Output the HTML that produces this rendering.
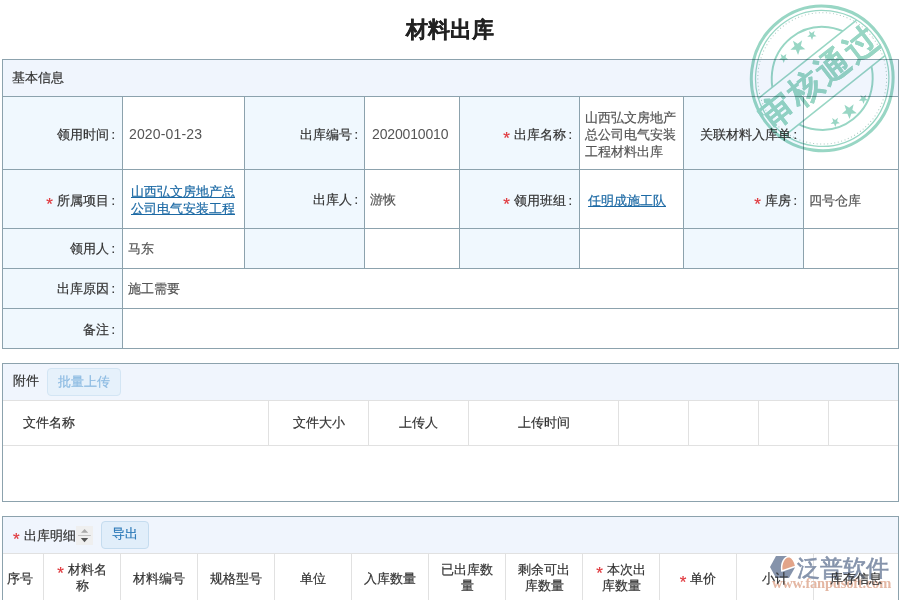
<!DOCTYPE html>
<html><head><meta charset="utf-8">
<style>
html,body{margin:0;padding:0;width:900px;height:600px;overflow:hidden;background:#fff;}
body{position:relative;font-family:"Liberation Sans",sans-serif;font-size:13px;color:#333;}
.a{position:absolute;}
.h{position:absolute;height:1px;background:#8ca2ad;}
.v{position:absolute;width:1px;background:#8ca2ad;}
.hg{position:absolute;height:1px;background:#e1e1e1;}
.vg{position:absolute;width:1px;background:#e1e1e1;}
.t{position:absolute;white-space:nowrap;line-height:17px;color:#333;-webkit-text-stroke:0.2px currentColor;}
.r{text-align:right;}
.c{text-align:center;}
.val{color:#555;}
.d{font-size:14px;letter-spacing:0.15px;-webkit-text-stroke:0;}
.d2{letter-spacing:-0.15px;}
.req{color:#e0393e;display:inline-block;font-size:17px;line-height:10px;position:relative;top:5px;margin-right:4px;}
.lk{color:#1d6aa5;text-decoration:underline;}
.co{font-weight:normal;margin-left:2.5px;}
.lab{background:#f0f8fe;}
.hdr{background:#f0f5fd;}
</style></head><body>

<!-- title -->
<div class="t c" style="left:0;top:16px;width:900px;font-size:22px;font-weight:bold;line-height:28px;color:#222;">材料出库</div>

<!-- ============ BOX 1 ============ -->
<div class="a hdr" style="left:3px;top:60px;width:895px;height:36px;"></div>
<div class="a lab" style="left:3px;top:97px;width:119px;height:251px;"></div>
<div class="a lab" style="left:245px;top:97px;width:119px;height:171px;"></div>
<div class="a lab" style="left:460px;top:97px;width:119px;height:171px;"></div>
<div class="a lab" style="left:684px;top:97px;width:119px;height:171px;"></div>
<div class="h" style="left:2px;top:59px;width:897px;"></div>
<div class="h" style="left:2px;top:348px;width:897px;"></div>
<div class="v" style="left:2px;top:59px;height:290px;"></div>
<div class="v" style="left:898px;top:59px;height:290px;"></div>
<div class="h" style="left:2px;top:96px;width:897px;"></div>
<div class="h" style="left:2px;top:169px;width:897px;"></div>
<div class="h" style="left:2px;top:228px;width:897px;"></div>
<div class="h" style="left:2px;top:268px;width:897px;"></div>
<div class="h" style="left:2px;top:308px;width:897px;"></div>
<div class="v" style="left:122px;top:96px;height:252px;"></div>
<div class="v" style="left:244px;top:96px;height:172px;"></div>
<div class="v" style="left:364px;top:96px;height:172px;"></div>
<div class="v" style="left:459px;top:96px;height:172px;"></div>
<div class="v" style="left:579px;top:96px;height:172px;"></div>
<div class="v" style="left:683px;top:96px;height:172px;"></div>
<div class="v" style="left:803px;top:96px;height:172px;"></div>

<div class="t" style="left:12px;top:69px;">基本信息</div>

<!-- row1 -->
<div class="t r" style="right:785px;top:126px;">领用时间<b class="co">:</b></div>
<div class="t val d" style="left:129px;top:126px;">2020-01-23</div>
<div class="t r" style="right:542px;top:126px;">出库编号<b class="co">:</b></div>
<div class="t val d d2" style="left:372px;top:126px;">2020010010</div>
<div class="t r" style="right:328px;top:126px;"><span class="req">*</span>出库名称<b class="co">:</b></div>
<div class="t val" style="left:585px;top:109px;">山西弘文房地产<br>总公司电气安装<br>工程材料出库</div>
<div class="t r" style="right:103px;top:126px;">关联材料入库单<b class="co">:</b></div>

<!-- row2 -->
<div class="t r" style="right:785px;top:192px;"><span class="req">*</span>所属项目<b class="co">:</b></div>
<div class="t" style="left:131px;top:183px;"><span class="lk">山西弘文房地产总<br>公司电气安装工程</span></div>
<div class="t r" style="right:542px;top:191px;">出库人<b class="co">:</b></div>
<div class="t val" style="left:370px;top:191px;">游恢</div>
<div class="t r" style="right:328px;top:192px;"><span class="req">*</span>领用班组<b class="co">:</b></div>
<div class="t" style="left:588px;top:192px;"><span class="lk">任明成施工队</span></div>
<div class="t r" style="right:103px;top:192px;"><span class="req">*</span>库房<b class="co">:</b></div>
<div class="t val" style="left:809px;top:192px;">四号仓库</div>

<!-- row3-5 -->
<div class="t r" style="right:785px;top:240px;">领用人<b class="co">:</b></div>
<div class="t val" style="left:128px;top:240px;">马东</div>
<div class="t r" style="right:785px;top:280px;">出库原因<b class="co">:</b></div>
<div class="t val" style="left:128px;top:280px;">施工需要</div>
<div class="t r" style="right:785px;top:321px;">备注<b class="co">:</b></div>

<!-- stamp -->
<svg class="a" style="left:0;top:0;mix-blend-mode:multiply;" width="900" height="170" viewBox="0 0 900 170">
<defs><clipPath id="cb"><rect x="-80" y="-80" width="160" height="55.7"/><rect x="-80" y="21.5" width="160" height="60"/></clipPath></defs>
<g transform="translate(822.2,78.4) scale(0.98,1) rotate(-38)" fill="none" stroke="#98d6c4">
<circle r="72.3" stroke-width="3.1"/>
<circle r="68" stroke-width="1.3"/>
<circle r="65.7" stroke-width="1" stroke-dasharray="1 2.6" stroke="#a9c9c0"/>
<circle r="51.5" stroke-width="2" clip-path="url(#cb)"/>
<line x1="-63.5" y1="-24.3" x2="63.5" y2="-24.3" stroke-width="1.6"/>
<line x1="-64.5" y1="21.5" x2="64.5" y2="21.5" stroke-width="1.6"/>
<g fill="#98d6c4" stroke="none">
<polygon points="-18.5,-45.3 -17.3,-42.0 -13.7,-41.8 -16.5,-39.7 -15.6,-36.3 -18.5,-38.2 -21.4,-36.3 -20.5,-39.7 -23.3,-41.8 -19.7,-42.0"/>
<polygon points="-0.3,-48.1 1.7,-42.8 7.3,-42.6 2.9,-39.1 4.4,-33.6 -0.3,-36.7 -5.0,-33.6 -3.5,-39.1 -7.9,-42.6 -2.3,-42.8"/>
<polygon points="18.4,-45.7 19.6,-42.4 23.2,-42.2 20.4,-40.1 21.3,-36.7 18.4,-38.6 15.5,-36.7 16.4,-40.1 13.6,-42.2 17.2,-42.4"/>
<polygon points="-16.4,37.5 -15.2,40.8 -11.6,41.0 -14.4,43.1 -13.5,46.5 -16.4,44.6 -19.3,46.5 -18.4,43.1 -21.2,41.0 -17.6,40.8"/>
<polygon points="1.7,34.7 3.7,40.0 9.3,40.2 4.9,43.7 6.4,49.2 1.7,46.1 -3.0,49.2 -1.5,43.7 -5.9,40.2 -0.3,40.0"/>
<polygon points="20.5,37.1 21.7,40.4 25.3,40.6 22.5,42.7 23.4,46.1 20.5,44.2 17.6,46.1 18.5,42.7 15.7,40.6 19.3,40.4"/>
<g font-family="Liberation Sans, sans-serif" font-size="34" font-weight="900" text-anchor="middle" dominant-baseline="central" stroke="#98d6c4" stroke-width="0.2" stroke-linejoin="round">
<text x="-56.2" y="-2.5">审</text><text x="-19.9" y="-2.5">核</text><text x="16.8" y="-2.5">通</text><text x="52.7" y="-2.5">过</text>
</g></g></g></svg>



<!-- ============ BOX 2 ============ -->
<div class="a hdr" style="left:3px;top:364px;width:895px;height:36px;"></div>
<div class="h" style="left:2px;top:363px;width:897px;"></div>
<div class="h" style="left:2px;top:501px;width:897px;"></div>
<div class="v" style="left:2px;top:363px;height:139px;"></div>
<div class="v" style="left:898px;top:363px;height:139px;"></div>
<div class="hg" style="left:3px;top:400px;width:895px;"></div>
<div class="hg" style="left:3px;top:445px;width:895px;"></div>
<div class="vg" style="left:268px;top:401px;height:44px;"></div>
<div class="vg" style="left:368px;top:401px;height:44px;"></div>
<div class="vg" style="left:468px;top:401px;height:44px;"></div>
<div class="vg" style="left:618px;top:401px;height:44px;"></div>
<div class="vg" style="left:688px;top:401px;height:44px;"></div>
<div class="vg" style="left:758px;top:401px;height:44px;"></div>
<div class="vg" style="left:828px;top:401px;height:44px;"></div>

<div class="t" style="left:13px;top:372px;">附件</div>
<div class="a" style="left:47px;top:368px;width:74px;height:28px;box-sizing:border-box;border:1px solid #d3e5f4;border-radius:4px;background:#e6f1fb;"></div>
<div class="t c" style="left:47px;top:373px;width:74px;color:#8dbbe2;">批量上传</div>
<div class="t" style="left:23px;top:414px;">文件名称</div>
<div class="t c" style="left:269px;top:414px;width:99px;">文件大小</div>
<div class="t c" style="left:369px;top:414px;width:99px;">上传人</div>
<div class="t c" style="left:469px;top:414px;width:149px;">上传时间</div>

<!-- ============ BOX 3 ============ -->
<div class="a hdr" style="left:3px;top:517px;width:895px;height:36px;"></div>
<div class="h" style="left:2px;top:516px;width:897px;"></div>
<div class="v" style="left:2px;top:516px;height:84px;"></div>
<div class="v" style="left:898px;top:516px;height:84px;"></div>
<div class="hg" style="left:3px;top:553px;width:895px;"></div>
<div class="vg" style="left:43px;top:554px;height:46px;"></div>
<div class="vg" style="left:120px;top:554px;height:46px;"></div>
<div class="vg" style="left:197px;top:554px;height:46px;"></div>
<div class="vg" style="left:274px;top:554px;height:46px;"></div>
<div class="vg" style="left:351px;top:554px;height:46px;"></div>
<div class="vg" style="left:428px;top:554px;height:46px;"></div>
<div class="vg" style="left:505px;top:554px;height:46px;"></div>
<div class="vg" style="left:582px;top:554px;height:46px;"></div>
<div class="vg" style="left:659px;top:554px;height:46px;"></div>
<div class="vg" style="left:736px;top:554px;height:46px;"></div>
<div class="vg" style="left:813px;top:554px;height:46px;"></div>

<div class="t" style="left:13px;top:527px;"><span class="req">*</span>出库明细</div>
<div class="a" style="left:76px;top:526px;width:17px;height:19px;background:#efefef;"></div>
<svg class="a" style="left:76px;top:525px;" width="17" height="20" viewBox="0 0 17 20">
<polygon points="5,7.8 12.2,7.8 8.6,4" fill="#a9a9a9"/><rect x="2" y="10" width="12.8" height="0.9" fill="#bdbdbd"/><polygon points="4.8,13 12.2,13 8.5,17.2" fill="#555"/>
</svg>
<div class="a" style="left:101px;top:521px;width:48px;height:28px;box-sizing:border-box;border:1px solid #c5dcef;border-radius:4px;background:#e1eefa;"></div>
<div class="t c" style="left:101px;top:525px;width:48px;color:#2c7ab8;">导出</div>

<!-- watermark -->
<svg class="a" style="left:0;top:540px;" width="900" height="60" viewBox="0 540 900 60">
<polygon points="776,556 786.5,556 795,567.5 789,578 776,578 770,567" fill="#8593ab"/>
<path d="M781.8,571 C780.8,563 784,556.8 789.6,556.6 C792.5,558 794.8,562 795.8,566.2 Z" fill="#e2a489" stroke="#fff" stroke-width="1.5" stroke-linejoin="round"/>
</svg>
<div class="a" style="left:797px;top:553px;font-size:23px;line-height:30px;color:#8593ab;white-space:nowrap;-webkit-text-stroke:0.6px #8593ab;">泛普软件</div>
<div class="a" style="left:772px;top:575px;font-family:'Liberation Serif',serif;font-size:14.5px;font-weight:bold;line-height:17px;color:#e4b7a3;white-space:nowrap;letter-spacing:-0.2px;">www.fanpusoft.com</div>


<div class="t" style="left:7px;top:570px;">序号</div>
<div class="t c" style="left:44px;top:562px;width:76px;line-height:16px;"><span class="req">*</span>材料名<br>称</div>
<div class="t c" style="left:121px;top:570px;width:76px;">材料编号</div>
<div class="t c" style="left:198px;top:570px;width:76px;">规格型号</div>
<div class="t c" style="left:275px;top:570px;width:76px;">单位</div>
<div class="t c" style="left:352px;top:570px;width:76px;">入库数量</div>
<div class="t c" style="left:429px;top:562px;width:76px;line-height:16px;">已出库数<br>量</div>
<div class="t c" style="left:506px;top:562px;width:76px;line-height:16px;">剩余可出<br>库数量</div>
<div class="t c" style="left:583px;top:562px;width:76px;line-height:16px;"><span class="req">*</span>本次出<br>库数量</div>
<div class="t c" style="left:660px;top:570px;width:76px;"><span class="req">*</span>单价</div>
<div class="t c" style="left:737px;top:570px;width:76px;">小计</div>
<div class="t c" style="left:814px;top:570px;width:84px;">库存信息</div>

</body></html>
